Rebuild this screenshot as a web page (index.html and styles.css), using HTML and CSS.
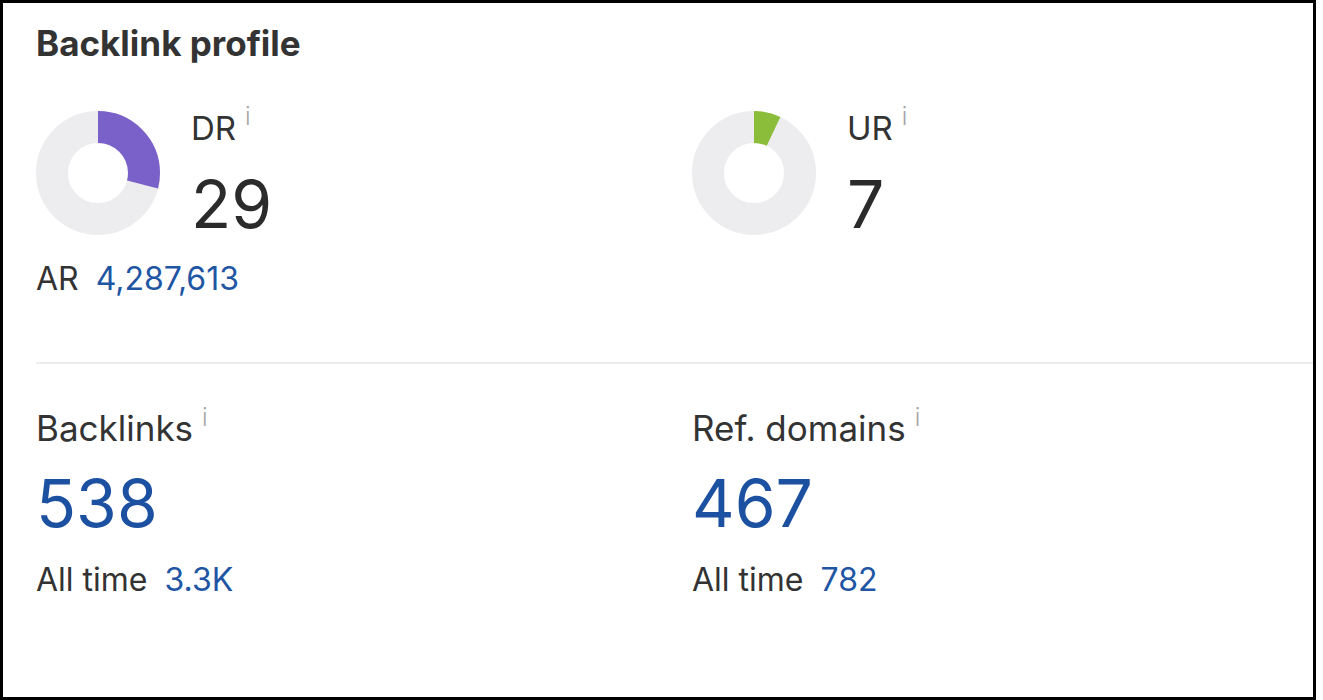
FILE: index.html
```html
<!DOCTYPE html>
<html lang="en">
<head>
    <meta charset="UTF-8">
    <meta name="viewport" content="width=device-width, initial-scale=1.0">
    <title>Backlink profile</title>
    <link rel="stylesheet" href="styles.css">
</head>
<body>

    <div class="card">
        <h1 class="card-title">Backlink profile</h1>

        <div class="rating-row">
            <div class="rating">
                <div class="rating-top">
                    <svg class="donut" width="124" height="124" viewBox="0 0 124 124">
                        <circle cx="62" cy="62" r="46" fill="none" stroke="#ededef" stroke-width="32"/>
                        <circle cx="62" cy="62" r="46" fill="none" stroke="#7a60c9" stroke-width="32"
                                stroke-dasharray="83.8 289.03" transform="rotate(-90 62 62)"/>
                    </svg>
                    <div class="rating-text">
                        <div class="label">DR<span class="info">i</span></div>
                        <div class="score">29</div>
                    </div>
                </div>
                <div class="sub">AR <a href="#">4,287,613</a></div>
            </div>

            <div class="rating">
                <div class="rating-top">
                    <svg class="donut" width="124" height="124" viewBox="0 0 124 124">
                        <circle cx="62" cy="62" r="46" fill="none" stroke="#ededef" stroke-width="32"/>
                        <circle cx="62" cy="62" r="46" fill="none" stroke="#8cbd3a" stroke-width="32"
                                stroke-dasharray="20.2 289.03" transform="rotate(-90 62 62)"/>
                    </svg>
                    <div class="rating-text">
                        <div class="label">UR<span class="info">i</span></div>
                        <div class="score">7</div>
                    </div>
                </div>
            </div>
        </div>

        <hr class="divider">

        <div class="stats-row">
            <div class="stat">
                <div class="label">Backlinks<span class="info">i</span></div>
                <a class="big-number" href="#">538</a>
                <div class="sub">All time <a href="#">3.3K</a></div>
            </div>
            <div class="stat">
                <div class="label">Ref. domains<span class="info">i</span></div>
                <a class="big-number" href="#">467</a>
                <div class="sub">All time <a href="#">782</a></div>
            </div>
        </div>
    </div>

</body>
</html>
```

FILE: styles.css
```css
body {
    margin: 0;
    background: #fff;
    font-family: Inter, "Noto Sans", sans-serif;
    color: #333;
}

a {
    color: #1f56a4;
    text-decoration: none;
}

.card {
    box-sizing: border-box;
    width: 1316px;
    height: 700px;
    border: 3px solid #000;
    padding: 20px 0 0 33px;
}

.card-title {
    margin: 0;
    font-size: 35px;
    font-weight: 700;
    line-height: 40px;
    color: #333;
}

.rating-row,
.stats-row {
    display: grid;
    grid-template-columns: 656px 1fr;
}

.rating-row {
    margin-top: 48px;
}

.rating-top {
    display: flex;
    align-items: flex-start;
}

.donut {
    display: block;
}

.rating-text {
    margin-left: 31px;
    margin-top: -3px;
}

.label {
    font-size: 33px;
    line-height: 40px;
    color: #333;
}

/* little "i" hint next to each metric name */
.info {
    position: relative;
    top: -15px;
    margin-left: 9px;
    font-size: 24px;
    font-weight: 300;
    color: #a5a5a5;
}

.score {
    font-size: 66px;
    line-height: 76px;
    color: #2b2b2b;
    margin-top: 14px;
}

.sub {
    font-size: 32px;
    line-height: 40px;
    color: #333;
}

.sub a {
    margin-left: 8px;
}

.rating .sub {
    margin-top: 17px;
}

.divider {
    border: none;
    border-top: 2px solid #ededed;
    margin: 63px 0 0 0;
}

.stats-row {
    margin-top: 43px;
}

.stat .label {
    font-size: 35px;
    line-height: 42px;
}

.big-number {
    display: block;
    font-size: 66px;
    line-height: 76px;
    color: #1c50a0;
    margin-top: 11px;
}

.stat .sub {
    margin-top: 19px;
}
```
